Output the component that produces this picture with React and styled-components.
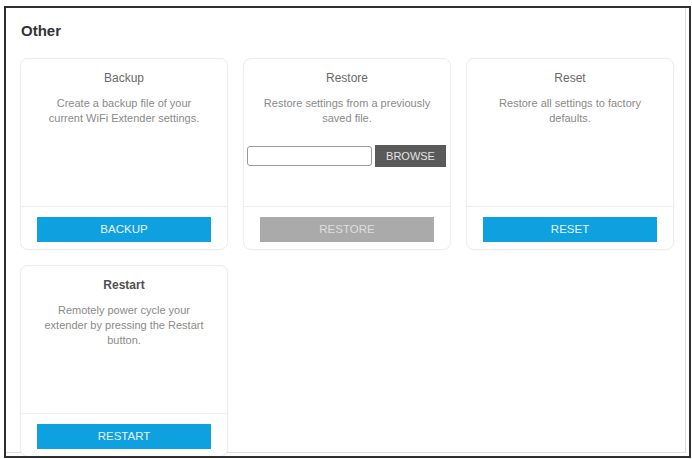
import React from "react";
import styled, { createGlobalStyle } from "styled-components";

const GlobalStyle = createGlobalStyle`
  html, body {
    margin: 0;
    padding: 0;
    background: #ffffff;
  }
  body {
    font-family: "Liberation Sans", Arial, sans-serif;
  }
  * { box-sizing: border-box; }
`;

const Frame = styled.section`
  margin: 6px 0 0 4px;
  width: 687px;
  height: 452px;
  border: 2px solid #2e2e2e;
  overflow: hidden;
  background: #fff;
  padding: 14px 0 0 14px;
  box-shadow: inset -3px -3px 0 #fff, inset -4px -4px 0 #dedede;
`;

const Heading = styled.h2`
  margin: 0 0 19px 1px;
  font-size: 15px;
  line-height: 17px;
  font-weight: bold;
  color: #333;
`;

const Grid = styled.div`
  display: grid;
  grid-template-columns: repeat(3, 208px);
  column-gap: 15px;
  row-gap: 15px;
`;

const Card = styled.div`
  height: 192px;
  border: 1px solid #ededed;
  border-radius: 8px;
  background: #fff;
  box-shadow: 0 0 2px rgba(0, 0, 0, 0.03);
  display: flex;
  flex-direction: column;
`;

const Body = styled.div`
  height: 147px;
  padding-top: 11px;
  text-align: center;
`;

const Title = styled.div`
  font-size: 12px;
  line-height: 16px;
  color: ${(p) => (p.$strong ? "#505050" : "#6a6a6a")};
  font-weight: ${(p) => (p.$strong ? "bold" : "normal")};
`;

const Desc = styled.p`
  margin: 10px 0 0;
  padding: 0 6px;
  font-size: 11px;
  line-height: 15px;
  color: #8a8a8a;
`;

const FileRow = styled.div`
  margin-top: 19px;
  display: flex;
  align-items: center;
  justify-content: space-between;
  padding: 0 4px 0 3px;
`;

const FileInput = styled.div`
  flex: none;
  width: 125px;
  height: 20px;
  border: 1px solid #9a9a9a;
  border-radius: 3px;
  background: #fff;
`;

const BrowseButton = styled.div`
  flex: none;
  width: 71px;
  height: 22px;
  background: #5a5a5a;
  color: #e2e2e2;
  font-size: 11px;
  line-height: 22px;
  text-align: center;
`;

const Footer = styled.div`
  border-top: 1px solid #eeeeee;
  padding: 10px 16px 0;
`;

const ActionButton = styled.div`
  height: 25px;
  background: ${(p) => (p.$disabled ? "#aaaaaa" : "#0fa0e0")};
  color: ${(p) => (p.$disabled ? "#dedede" : "#e6f5fd")};
  font-size: 11.5px;
  line-height: 25px;
  text-align: center;
`;

const cards = [
  {
    title: "Backup",
    lines: ["Create a backup file of your", "current WiFi Extender settings."],
    action: "BACKUP",
  },
  {
    title: "Restore",
    lines: ["Restore settings from a previously", "saved file."],
    action: "RESTORE",
    file: true,
    disabled: true,
  },
  {
    title: "Reset",
    lines: ["Restore all settings to factory", "defaults."],
    action: "RESET",
  },
  {
    title: "Restart",
    lines: [
      "Remotely power cycle your",
      "extender by pressing the Restart",
      "button.",
    ],
    action: "RESTART",
    strong: true,
  },
];

export default function App() {
  return (
    <>
      <GlobalStyle />
      <Frame>
        <Heading>Other</Heading>
        <Grid>
          {cards.map((c) => (
            <Card key={c.title}>
              <Body>
                <Title $strong={c.strong}>{c.title}</Title>
                <Desc>
                  {c.lines.map((l, i) => (
                    <React.Fragment key={i}>
                      {i > 0 && <br />}
                      {l}
                    </React.Fragment>
                  ))}
                </Desc>
                {c.file && (
                  <FileRow>
                    <FileInput />
                    <BrowseButton>BROWSE</BrowseButton>
                  </FileRow>
                )}
              </Body>
              <Footer>
                <ActionButton $disabled={c.disabled}>{c.action}</ActionButton>
              </Footer>
            </Card>
          ))}
        </Grid>
      </Frame>
    </>
  );
}
